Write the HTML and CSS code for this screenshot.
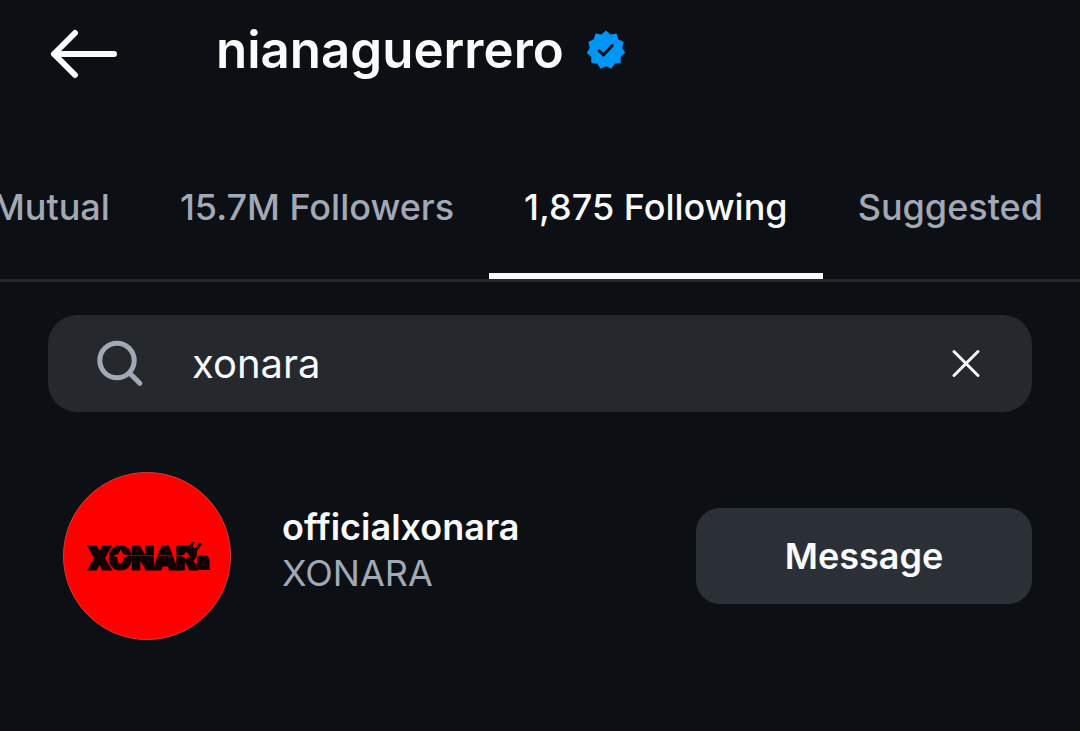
FILE: index.html
```html
<!DOCTYPE html>
<html lang="en">
<head>
<meta charset="utf-8">
<meta name="viewport" content="width=device-width, initial-scale=1">
<title>nianaguerrero</title>
<link rel="stylesheet" href="styles.css">
</head>
<body>
<header class="topbar">
  <button class="icon-button" type="button" aria-label="Back">
    <svg class="back-icon" viewBox="0 0 68 50" aria-hidden="true"><path d="M25 4 4 25l21 21M4 25h60"/></svg>
  </button>
  <div class="account">
    <h1 class="username">nianaguerrero</h1>
    <svg class="verified" viewBox="0 0 40 40" role="img" aria-label="Verified">
      <path class="seal" d="M20 .5 24.6 4.4 30.5 3.6 32.3 9.3 37.7 11.9 36.1 17.7 39.3 22.8 34.8 26.8 34.7 32.8 28.8 33.7 25.5 38.7 20 36.3 14.5 38.7 11.2 33.7 5.3 32.8 5.2 26.8.7 22.8 3.9 17.7 2.3 11.9 7.7 9.3 9.5 3.6 15.4 4.4z"/>
      <path class="check" d="m13.2 20.8 4.3 4.2 8.8-9.5"/>
    </svg>
  </div>
</header>
<nav class="tabs" aria-label="Connections">
  <a class="tab" href="#mutual">Mutual</a>
  <a class="tab" href="#followers">15.7M Followers</a>
  <a class="tab active" href="#following" aria-current="page">1,875 Following</a>
  <a class="tab" href="#suggested">Suggested</a>
</nav>
<main class="content">
  <form class="search" role="search">
    <label class="search-label" for="query" aria-label="Search">
      <svg class="search-icon" viewBox="0 0 48 48" aria-hidden="true"><circle cx="22" cy="20.5" r="17.2"/><path d="m34.5 33 10.3 10.3"/></svg>
    </label>
    <input class="search-input" id="query" type="text" value="xonara">
    <button class="icon-button" type="reset" aria-label="Clear search">
      <svg class="clear-icon" viewBox="0 0 30 30" aria-hidden="true"><path d="m3 2.500 24 24M27 2.500 3 26.500"/></svg>
    </button>
  </form>
  <ul class="people">
    <li class="person">
      <svg class="avatar" viewBox="0 0 168 168" role="img" aria-label="officialxonara profile picture">
        <circle class="avatar-disc" cx="84" cy="84" r="83.5"/>
        <text class="wordmark" x="26" y="97">XONAR<tspan class="wordmark-small">a</tspan></text>
        <path class="tick" d="m130 70-3 7M138 71l-6 8"/>
        <path class="spark" d="M50 83.700 55.500 82 57.700 77 60 82 66 83.500 118 83.600 121.500 82.500 123 79.500 124 82.500 128 84 124 85.500 123 88 121.500 85 118 84.300 66 84 60 85.500 57.700 90.500 55.500 85.500z"/>
      </svg>
      <div class="names">
        <strong class="handle">officialxonara</strong>
        <span class="display-name">XONARA</span>
      </div>
      <button class="message" type="button">Message</button>
    </li>
  </ul>
</main>
</body>
</html>
```
FILE: styles.css
```css
* { box-sizing: border-box; }
body {
  margin: 0;
  min-height: 100vh;
  background: #0c1014;
  color: #f9fafb;
  font-family: Inter, "Liberation Sans", sans-serif;
  font-size: 36px;
}
button { border: 0; padding: 0; background: none; color: inherit; font: inherit; cursor: pointer; }
.icon-button { display: flex; flex: none; }
.topbar { display: flex; align-items: center; height: 108px; padding: 0 50px; }
.back-icon { width: 68px; height: 50px; fill: none; stroke: #f9fafb; stroke-width: 6; stroke-linecap: round; stroke-linejoin: round; }
.account { display: flex; align-items: center; gap: 22px; padding: 0 0 8px 98px; }
.username { margin: 0; font-size: 51px; line-height: 60px; font-weight: 600; }
.verified { flex: none; width: 40px; height: 40px; }
.seal { fill: #0095f6; }
.check { fill: none; stroke: #0c1014; stroke-width: 3; stroke-linecap: round; stroke-linejoin: round; }
.tabs {
  display: flex;
  justify-content: flex-end;
  overflow: hidden;
  margin-top: 28px;
  padding-right: 2px;
  border-bottom: 3px solid #25282d;
}
.tab {
  flex: none;
  padding: 48px 35px 43px;
  border-bottom: 6px solid transparent;
  color: #a2a9b6;
  font-weight: 500;
  line-height: 46px;
  text-decoration: none;
}
.tab.active { border-color: #f9fafb; color: #f9fafb; }
.content { padding: 33px 48px; }
.search { display: flex; align-items: center; height: 97px; padding: 0 51px 0 47px; border-radius: 29px; background: #25282d; }
.search-label { display: flex; flex: none; }
.search-icon { width: 48px; height: 48px; fill: none; stroke: #a2a9b6; stroke-width: 5; stroke-linecap: round; }
.search-input {
  flex: 1;
  min-width: 0;
  margin: 0 24px 0 49px;
  padding: 0;
  border: 0;
  outline: 0;
  background: none;
  color: #f9fafb;
  font: 400 40px/50px Inter, "Liberation Sans", sans-serif;
}
.clear-icon { width: 30px; height: 30px; fill: none; stroke: #f9fafb; stroke-width: 3; stroke-linecap: round; }
.people { margin: 0; padding: 60px 0 0 15px; list-style: none; }
.person { display: flex; align-items: center; }
.avatar { flex: none; width: 168px; height: 168px; }
.avatar-disc { fill: #ff0000; stroke: #d83a36; stroke-width: 1; }
.wordmark { font-family: Roboto, "Liberation Sans", sans-serif; font-weight: 900; font-size: 32px; stroke: #100000; stroke-width: 3; fill: #100000; }
.wordmark-small { font-size: 24px; stroke-width: 2; }
.tick { fill: none; stroke: #100000; stroke-width: 3; }
.spark { fill: #ff0000; }
.names { display: flex; flex: 1; flex-direction: column; min-width: 0; padding: 0 24px 12px 51px; line-height: 46px; }
.handle { font-weight: 600; }
.display-name { color: #a2a9b6; }
.message { flex: none; width: 336px; height: 96px; border-radius: 24px; background: #2b3036; font-weight: 600; }
```
